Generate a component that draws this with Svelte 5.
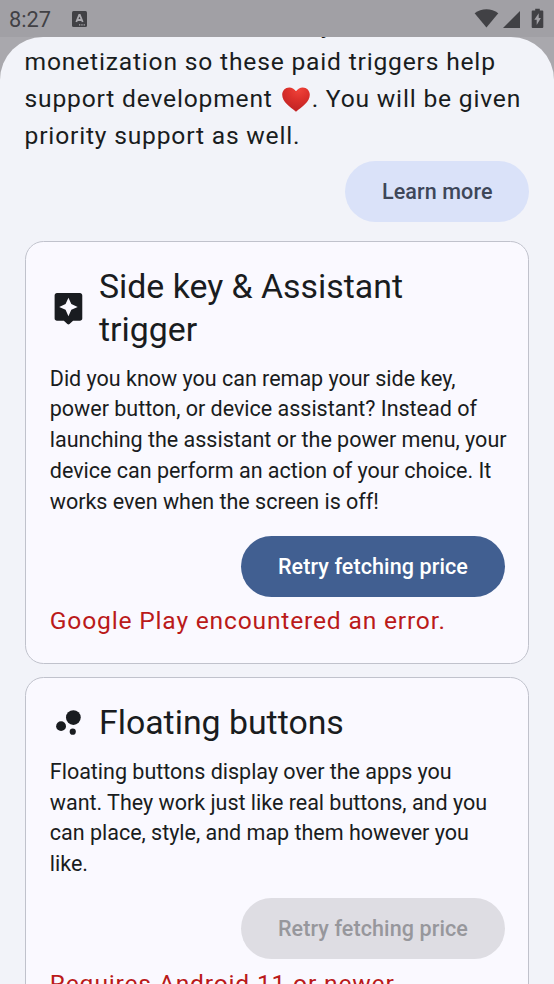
<script lang="ts">
    const triggers = [
        {
            icon: "assistant",
            title: "Side key & Assistant trigger",
            description: "Did you know you can remap your side key, power button, or device assistant? Instead of launching the assistant or the power menu, your device can perform an action of your choice. It works even when the screen is off!",
            error: "Google Play encountered an error.",
            enabled: true
        },
        {
            icon: "bubbles",
            title: "Floating buttons",
            description: "Floating buttons display over the apps you want. They work just like real buttons, and you can place, style, and map them however you like.",
            error: "Requires Android 11 or newer.",
            enabled: false
        }
    ];
</script>

<div class="screen">
    <header class="status-bar">
        <span class="clock">8:27</span>
        <svg class="keyboard" viewBox="0 0 15 16">
            <rect width="15" height="16" rx="1.5" fill="#414145" />
            <path d="M4.3 11 7.2 4h.6l2.9 7M5.3 9h4.4" fill="none" stroke="#aaa9ae" stroke-width="1.8" />
            <path d="M7 13.8h1.3M9.3 13.8h1.3M11.6 13.8h1.3" stroke="#aaa9ae" stroke-width="1.2" />
        </svg>
        <svg class="indicators" viewBox="0 0 70 22" fill="#414145">
            <path d="M.6 5.3C7.5-.2 17.4-.2 24.3 5.3L12.45 19.5z" />
            <path d="M46 3v17H29z" />
            <path d="M58.7 2.5h2.5V.8h4.6v1.7h2.5q1 0 1 1V19q0 1-1 1h-9.6q-1 0-1-1V3.5q0-1 1-1z" />
            <path d="M64.7 5.2 60.3 11.7h2.4V17l4.2-7h-2.2z" fill="#a1a0a5" />
        </svg>
    </header>

    <main class="sheet">
        <p class="intro">
            This has no adverts or any other<br />
            monetization so these paid triggers help<br />
            support development <svg class="heart" viewBox="0 0 28 25" role="img" aria-label="heart">
                <defs>
                    <radialGradient id="heart-fill" cx=".6" cy=".1" r=".8">
                        <stop offset="0" stop-color="#f0433a" />
                        <stop offset=".5" stop-color="#dc302b" />
                        <stop offset="1" stop-color="#c42526" />
                    </radialGradient>
                </defs>
                <path d="M14 4.3C12.2 1.6 9.9.4 7.3.4 3.2.4.2 3.5.2 7.7c0 7.3 7.7 11.7 13.8 17 6.100-5.300 13.800-9.700 13.800-17 0-4.200-3-7.300-7.100-7.300-2.600 0-4.900 1.200-6.700 3.900z" fill="url(#heart-fill)" />
            </svg>. You will be given<br />
            priority support as well.
        </p>
        <div class="actions">
            <button class="tonal">Learn more</button>
        </div>

        {#each triggers as trigger (trigger.title)}
            <section class="card">
                <div class="card-title">
                    <svg viewBox="0 0 24 24">
                        {#if trigger.icon === "assistant"}
                            <path d="M19.5 2h-15C3.700 2 3 2.700 3 3.500v15c0 .8.700 1.500 1.500 1.500H9l2.300 2.100q.7.600 1.400 0L15 20h4.500c.8 0 1.500-.7 1.500-1.500v-15c0-.8-.7-1.500-1.500-1.500zm-5.620 10.880L12 17l-1.880-4.120L6 11l4.120-1.880L12 5l1.880 4.120L18 11z" />
                        {:else}
                            <circle cx="7.2" cy="14.4" r="3.2" />
                            <circle cx="14.8" cy="18" r="2" />
                            <circle cx="15.2" cy="8.8" r="4.8" />
                        {/if}
                    </svg>
                    <h2>{trigger.title}</h2>
                </div>
                <p class="description">{trigger.description}</p>
                <div class="actions">
                    <button disabled={!trigger.enabled}>Retry fetching price</button>
                </div>
                <p class="error">{trigger.error}</p>
            </section>
        {/each}
    </main>
</div>

<style>
    :global(body) {
        margin: 0;
        overflow: hidden;
    }

    .screen {
        display: flex;
        flex-direction: column;
        width: 554px;
        height: 984px;
        overflow: hidden;
        background: #a9a8ad;
        color: #191c20;
        font-family: Roboto, sans-serif;
    }

    .status-bar {
        display: flex;
        flex: none;
        align-items: center;
        box-sizing: border-box;
        height: 37px;
        padding: 0 10px 0 9px;
        background: #a1a0a5;
        color: #414145;
    }

    .clock {
        width: 63px;
        font-size: 21.8px;
        line-height: 24px;
        padding-top: 2px;
    }

    .keyboard {
        width: 15px;
        height: 16px;
    }

    .indicators {
        width: 70px;
        height: 22px;
        margin-left: auto;
    }

    .sheet {
        display: flex;
        flex: 1;
        flex-direction: column;
        box-sizing: border-box;
        min-height: 0;
        padding: 0 24.6px;
        overflow: hidden;
        border-radius: 43px 43px 0 0;
        background: #f2f3f9;
    }

    .sheet > * {
        flex: none;
    }

    p,
    h2 {
        margin: 0;
        font-weight: 400;
    }

    .intro,
    .error {
        font-size: 24.62px;
        line-height: 36.93px;
        letter-spacing: 0.81px;
        white-space: nowrap;
    }

    .intro {
        margin-top: -29.6px;
    }

    .heart {
        width: 28px;
        height: 25px;
        margin: -4px 2px -4px 2px;
        vertical-align: -1px;
    }

    .actions {
        display: flex;
        justify-content: flex-end;
        padding: 6.15px 0;
    }

    .intro + .actions {
        padding-top: 5.7px;
    }

    button {
        height: 61.3px;
        padding: 0 36.9px;
        border: none;
        border-radius: 31px;
        background: #415f91;
        color: #fff;
        font: 500 21.54px Roboto, sans-serif;
        letter-spacing: 0.09px;
    }

    .tonal {
        background: #dae2f9;
        color: #3e4759;
    }

    button:disabled {
        background: #dedde3;
        color: #97979c;
    }

    .card {
        box-sizing: border-box;
        margin-top: 12.3px;
        padding: 23.4px 23.6px 23.4px 24.2px;
        border: 1px solid #c0c2cc;
        border-radius: 18.5px;
        background: #faf9ff;
    }

    .card-title {
        display: flex;
        align-items: center;
        gap: 12.3px;
    }

    .card-title svg {
        flex: none;
        width: 36.9px;
        height: 36.9px;
        fill: #191c20;
    }

    h2 {
        font-size: 33.85px;
        line-height: 43px;
    }

    .description {
        margin: 12.6px -4px 12.2px 0;
        font-size: 21.54px;
        line-height: 30.77px;
        letter-spacing: -0.02px;
    }

    .card .error {
        color: #ba1a1a;
    }
</style>
